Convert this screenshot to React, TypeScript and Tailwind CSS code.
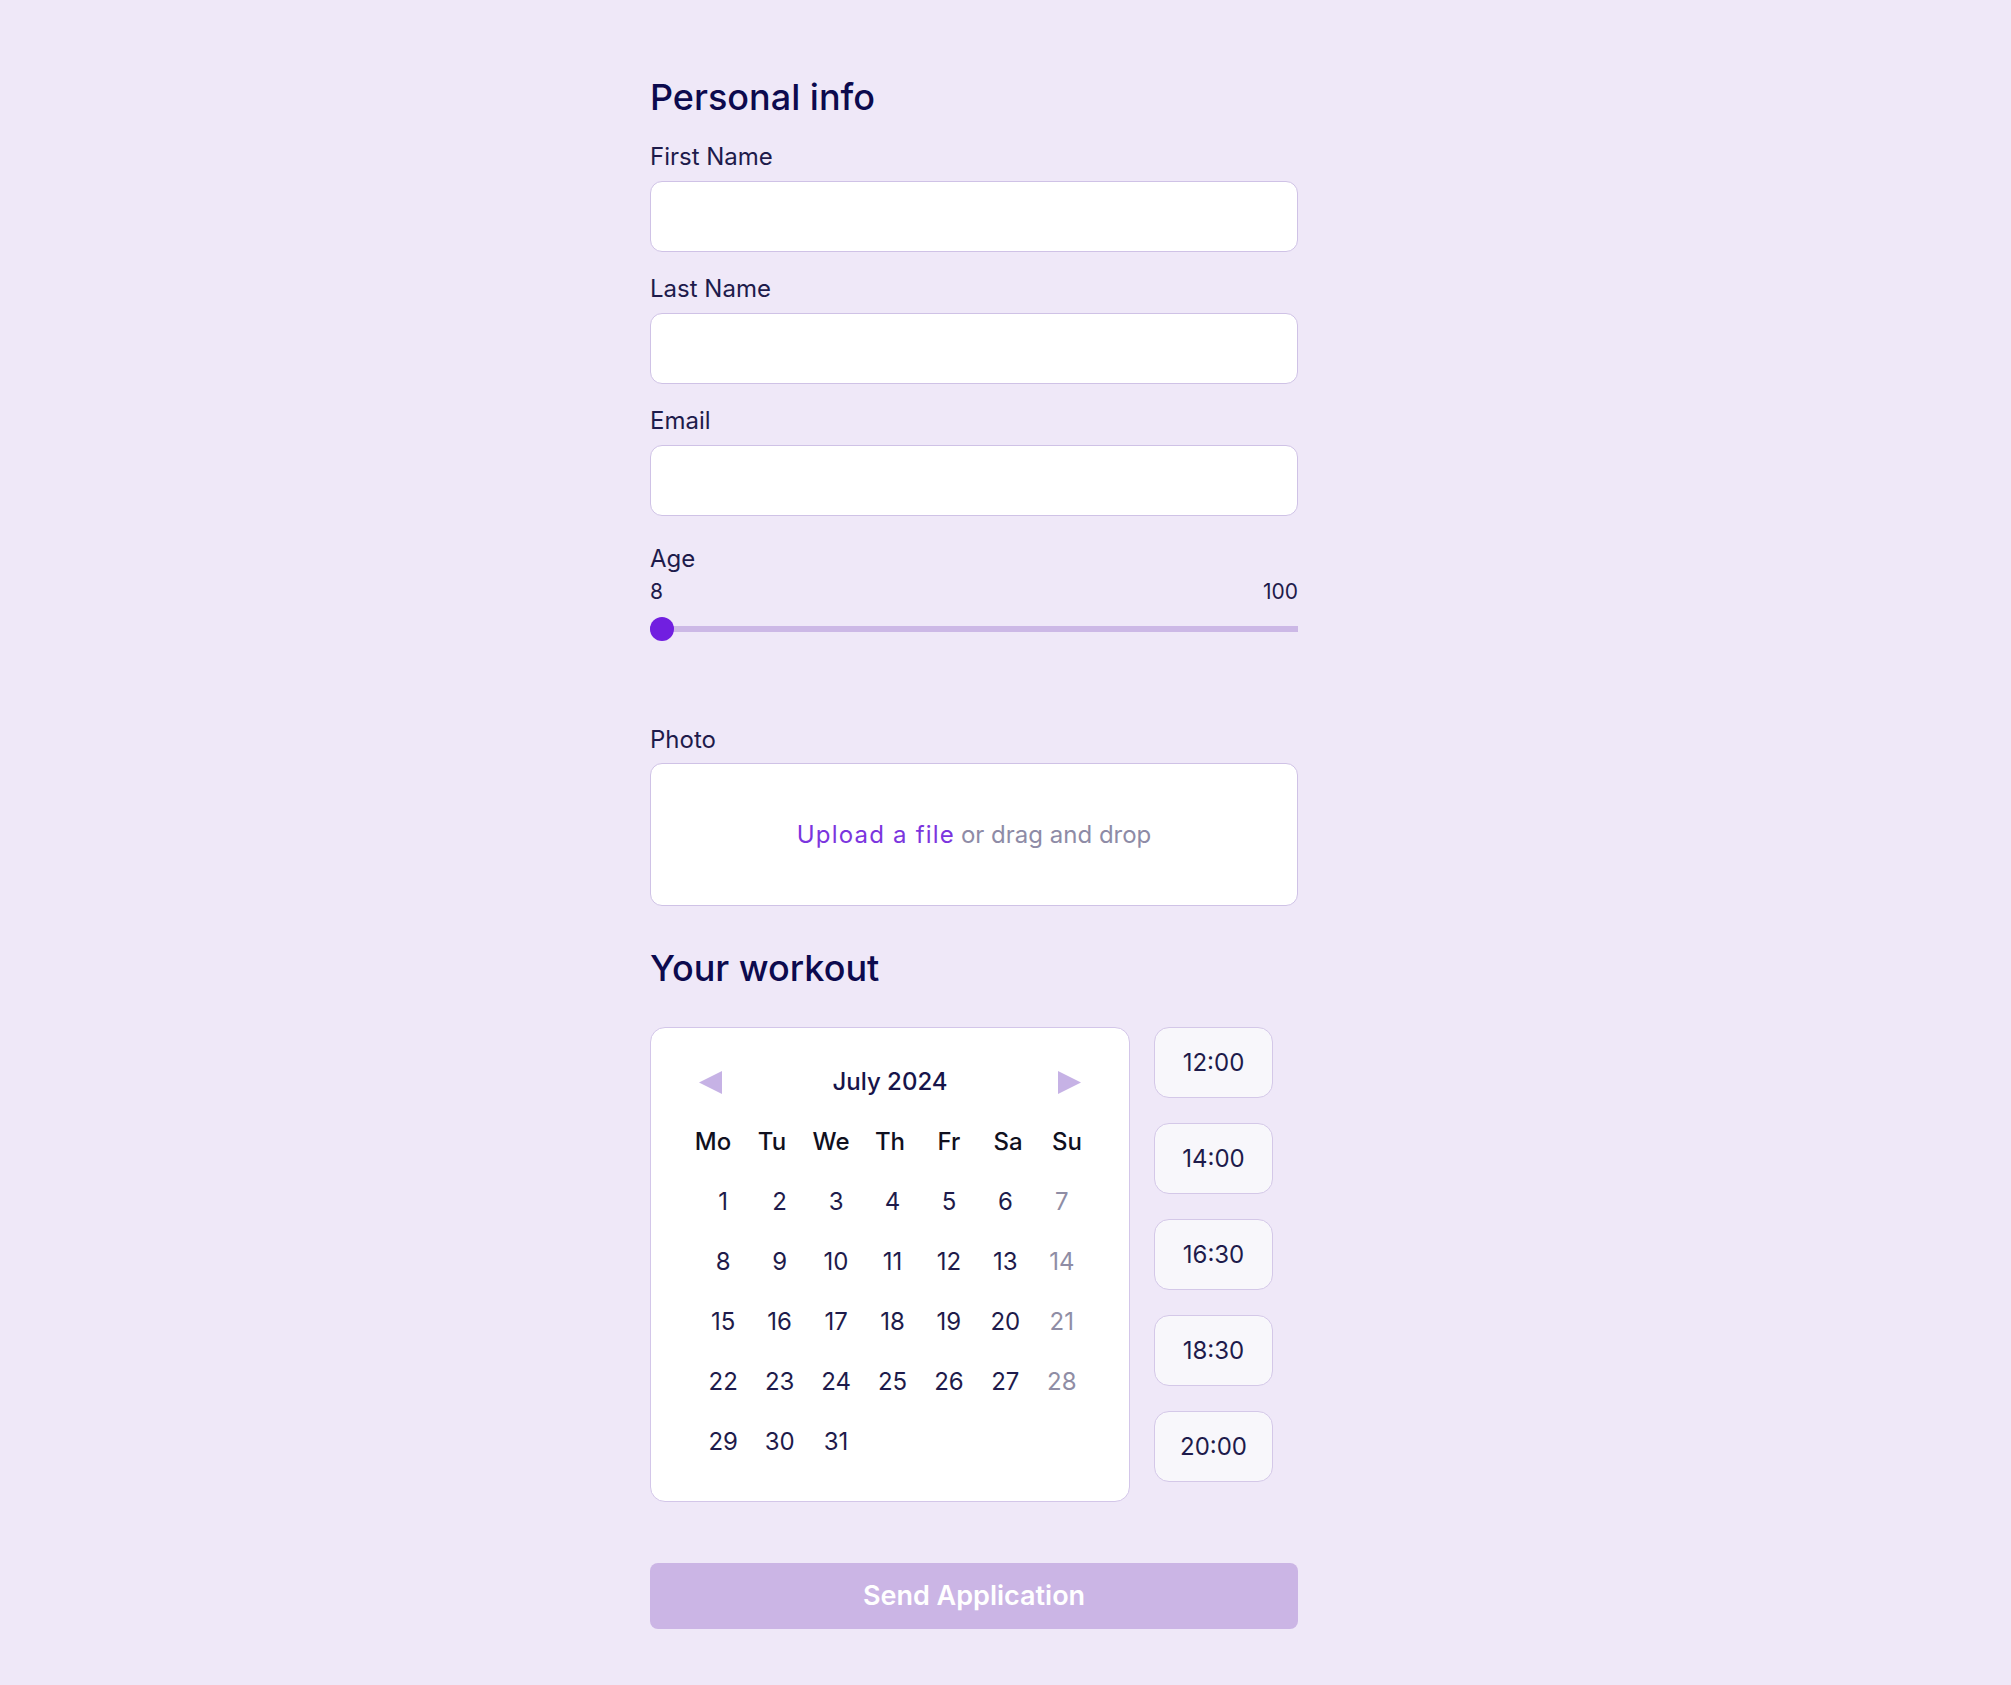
import React from 'react';

const days = [
  [1, 2, 3, 4, 5, 6, 7],
  [8, 9, 10, 11, 12, 13, 14],
  [15, 16, 17, 18, 19, 20, 21],
  [22, 23, 24, 25, 26, 27, 28],
  [29, 30, 31, null, null, null, null],
];

const weekdays = ['Mo', 'Tu', 'We', 'Th', 'Fr', 'Sa', 'Su'];
const times = ['12:00', '14:00', '16:30', '18:30', '20:00'];

function Field({ label, first }: { label: string; first?: boolean }) {
  return (
    <div className={first ? '' : 'mt-[18px]'}>
      <label className="block text-[24px] leading-[36px] text-[#1e1b4b] pt-[1px] mb-[6px]">{label}</label>
      <input
        type="text"
        className="block w-full h-[71px] bg-white border border-[#cfc2e6] rounded-[12px] px-4 text-[24px] outline-none"
      />
    </div>
  );
}

function Calendar() {
  return (
    <div className="w-[480px] h-[475px] shrink-0 bg-white border border-[#d3c6e9] rounded-[15px] pt-[36px]">
      <div className="h-[36px] px-[48px] flex items-center justify-between">
        <svg width="23" height="23" viewBox="0 0 23 23">
          <polygon points="23,0 0,11.5 23,23" fill="#c6b2e5" />
        </svg>
        <span className="text-[24px] leading-[36px] font-medium text-[#17144a]">July 2024</span>
        <svg width="23" height="23" viewBox="0 0 23 23">
          <polygon points="0,0 23,11.5 0,23" fill="#c6b2e5" />
        </svg>
      </div>
      <div className="mt-[24px] w-[413px] mx-auto grid grid-cols-7 h-[36px]">
        {weekdays.map((d) => (
          <div key={d} className="text-center text-[24px] leading-[36px] font-medium text-[#10101e]">
            {d}
          </div>
        ))}
      </div>
      <div className="mt-[12px] ml-[44px] w-[395px] grid grid-cols-7">
        {days.flat().map((d, i) => (
          <div
            key={i}
            className={`h-[60px] flex items-center justify-center text-[24px] leading-[60px] ${
              i % 7 === 6 ? 'text-[#8f8da5]' : 'text-[#1e1b4b]'
            }`}
          >
            {d ?? ''}
          </div>
        ))}
      </div>
    </div>
  );
}

export default function App() {
  return (
    <div
      className="min-h-screen bg-[#efe8f8] pt-[73px] pb-[56px] pr-[63px] flex justify-center"
      style={{ fontFamily: 'Inter, "Noto Sans", sans-serif' }}
    >
      <div className="w-[648px] flex flex-col">
        <h2 className="text-[36px] leading-[48px] font-medium text-[#0c0a4e] mb-[17px]">Personal info</h2>

        <Field label="First Name" first />
        <Field label="Last Name" />
        <Field label="Email" />

        <div className="mt-[25px]">
          <label className="block text-[24px] leading-[36px] text-[#1e1b4b]">Age</label>
          <div className="flex justify-between text-[21px] leading-[30px] text-[#1e1b4b]">
            <span>8</span>
            <span>100</span>
          </div>
          <div className="relative mt-[10px] h-[24px] flex items-center">
            <div className="w-full h-[6px] bg-[#ccb8e6]" />
            <div className="absolute left-0 top-0 w-[24px] h-[24px] rounded-full bg-[#711fe0]" />
          </div>
        </div>

        <div className="mt-[80px]">
          <label className="block text-[24px] leading-[36px] text-[#1e1b4b] pt-[1px] mb-[5px]">Photo</label>
          <div className="h-[143px] bg-white border border-[#cfc2e6] rounded-[12px] flex items-center justify-center text-[24px] leading-[36px]">
            <span className="text-[#7b35de] tracking-[1.2px]">Upload a file</span>
            <span className="text-[#8e8ba6] ml-[6px]">or drag and drop</span>
          </div>
        </div>

        <h2 className="mt-[38px] text-[36px] leading-[48px] font-medium text-[#0c0a4e]">Your workout</h2>

        <div className="mt-[35px] flex gap-[24px] items-start">
          <Calendar />
          <div className="flex flex-col gap-[25px]">
            {times.map((t) => (
              <button
                key={t}
                className="w-[119px] h-[71px] bg-[#f8f7fb] border border-[#d4c8e8] rounded-[15px] text-[24px] leading-[36px] text-[#1e1b4b]"
              >
                {t}
              </button>
            ))}
          </div>
        </div>

        <button className="mt-[61px] h-[66px] w-full rounded-[8px] bg-[#cbb5e5] text-white text-[27px] leading-[36px] font-semibold">
          Send Application
        </button>
      </div>
    </div>
  );
}
